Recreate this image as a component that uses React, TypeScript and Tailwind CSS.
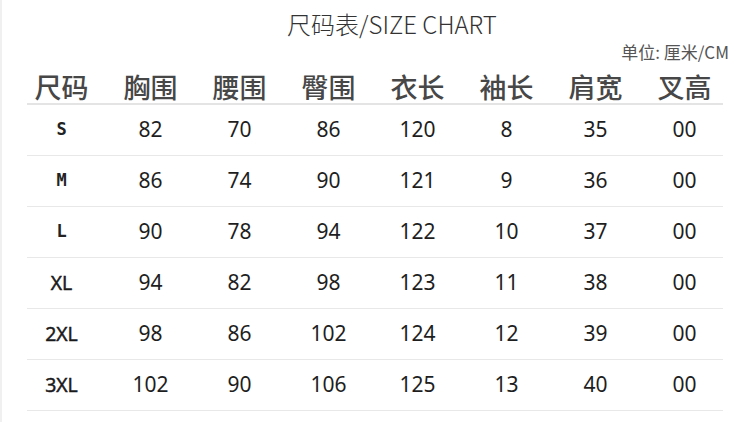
import React from "react";

const headers = ["尺码", "胸围", "腰围", "臀围", "衣长", "袖长", "肩宽", "叉高"];
const rows: string[][] = [
  ["S", "82", "70", "86", "120", "8", "35", "00"],
  ["M", "86", "74", "90", "121", "9", "36", "00"],
  ["L", "90", "78", "94", "122", "10", "37", "00"],
  ["XL", "94", "82", "98", "123", "11", "38", "00"],
  ["2XL", "98", "86", "102", "124", "12", "39", "00"],
  ["3XL", "102", "90", "106", "125", "13", "40", "00"],
];

export default function App() {
  return (
    <div className="w-[750px] h-[422px] bg-white border-l-2 border-[#f0f0f0] overflow-hidden font-['Noto_Sans','Noto_Sans_CJK_SC',sans-serif] text-[#222]">
      <div className="h-[45px] pt-[2px] flex items-center justify-center pl-[32px] text-[24px] font-light text-[#333] font-['Noto_Sans_CJK_SC',sans-serif]">
        尺码表/SIZE CHART
      </div>
      <div className="h-[13px] leading-[13px] text-right pr-[21px] text-[17px] text-[#555] font-['Noto_Sans_CJK_SC',sans-serif]">
        单位: 厘米/CM
      </div>
      <div className="h-[45px] pt-[12px] pl-[15px] grid grid-cols-[repeat(8,89px)] items-center text-[27px] font-medium text-[#474747] font-['Noto_Sans_CJK_SC',sans-serif]">
        {headers.map((h) => (
          <div key={h} className="text-center leading-none">
            {h}
          </div>
        ))}
      </div>
      <div className="ml-[25px] w-[696px] h-[2px] bg-[#e4e4e4]" />
      {rows.map((r) => (
        <div key={r[0]}>
          <div className="h-[50px] pl-[15px] grid grid-cols-[repeat(8,89px)] items-center">
            {r.map((c, i) => (
              <div
                key={i}
                className={
                  i === 0
                    ? c.length === 1
                      ? "text-center text-[17px] font-bold font-['DejaVu_Sans_Mono',monospace] text-[#222]"
                      : "text-center text-[19.5px] font-normal font-['Open_Sans',sans-serif] text-[#1a1a1a] [-webkit-text-stroke:0.5px_#1a1a1a]"
                    : "text-center text-[21px] text-[#1e1e1e]"
                }
              >
                {c}
              </div>
            ))}
          </div>
          <div className="ml-[25px] w-[696px] h-px bg-[#e8e8e8]" />
        </div>
      ))}
    </div>
  );
}
